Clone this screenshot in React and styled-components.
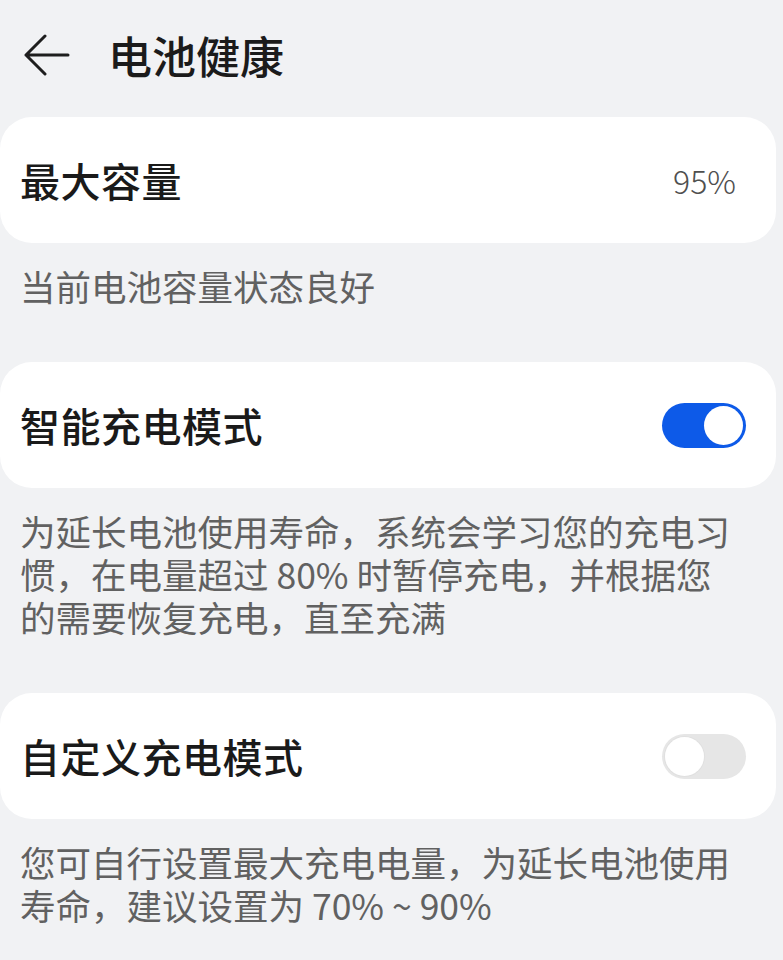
import React from 'react';
import styled, { createGlobalStyle } from 'styled-components';

const GlobalStyle = createGlobalStyle`
  html, body {
    margin: 0;
    padding: 0;
    background: #f1f2f4;
  }
  body {
    font-family: "Noto Sans CJK SC", "Noto Sans", sans-serif;
    -webkit-font-smoothing: antialiased;
  }
`;

const Page = styled.div`
  width: 783px;
  min-height: 960px;
  background: #f1f2f4;
  overflow: hidden;
`;

const Header = styled.div`
  display: flex;
  align-items: center;
  height: 110px;
  padding-left: 24px;
  gap: 38px;
`;

const BackButton = styled.button`
  display: flex;
  align-items: center;
  justify-content: center;
  padding: 0;
  border: none;
  background: none;
  width: 46px;
  height: 46px;
`;

const Title = styled.h1`
  margin: 0;
  font-size: 44px;
  font-weight: 500;
  color: #1b1b1b;
  line-height: 1;
`;

const Section = styled.div`
  display: flex;
  flex-direction: column;
  margin-top: ${p => p.$first ? '7px' : '55px'};
`;

const Card = styled.div`
  display: flex;
  align-items: center;
  justify-content: space-between;
  height: 126px;
  width: 776px;
  box-sizing: border-box;
  padding: 0 40px 0 20px;
  background: #ffffff;
  border-radius: 32px;
`;

const Label = styled.span`
  font-size: 40px;
  font-weight: 500;
  color: #1a1a1a;
  letter-spacing: 0.5px;
`;

const Value = styled.span`
  font-size: 32px;
  font-weight: 300;
  color: #4f4f4f;
`;

const Note = styled.p`
  margin: 21px 0 0;
  padding: 0 40px 0 20px;
  font-size: 35.5px;
  line-height: 43px;
  color: #616161;
`;

const Track = styled.div`
  display: flex;
  align-items: center;
  justify-content: ${p => p.$on ? 'flex-end' : 'flex-start'};
  width: 84px;
  height: 45px;
  box-sizing: border-box;
  padding: 0 3px;
  margin-right: -10px;
  border-radius: 23px;
  background: ${p => p.$on ? '#0d5ae8' : '#e6e6e6'};
`;

const Knob = styled.div`
  width: 39px;
  height: 39px;
  border-radius: 50%;
  background: #ffffff;
  box-shadow: ${p => p.$on ? 'none' : '0 0 0 1px #e0e0e0'};
`;

const Toggle = ({ on }) => (
  <Track $on={on}>
    <Knob $on={on} />
  </Track>
);

const BackArrow = () => (
  <svg width="46" height="46" viewBox="0 0 46 46" fill="none">
    <path d="M44 23H2M2 23L21 4M2 23L21 42" stroke="#1e1e1e" strokeWidth="3" strokeLinecap="round" strokeLinejoin="round" />
  </svg>
);

export default function App() {
  return (
    <Page>
      <GlobalStyle />
      <Header>
        <BackButton aria-label="返回">
          <BackArrow />
        </BackButton>
        <Title>电池健康</Title>
      </Header>

      <Section $first>
        <Card>
          <Label>最大容量</Label>
          <Value>95%</Value>
        </Card>
        <Note>当前电池容量状态良好</Note>
      </Section>

      <Section>
        <Card>
          <Label>智能充电模式</Label>
          <Toggle on />
        </Card>
        <Note>为延长电池使用寿命，系统会学习您的充电习惯，在电量超过 80% 时暂停充电，并根据您的需要恢复充电，直至充满</Note>
      </Section>

      <Section>
        <Card>
          <Label>自定义充电模式</Label>
          <Toggle on={false} />
        </Card>
        <Note>您可自行设置最大充电电量，为延长电池使用寿命，建议设置为 70% ~ 90%</Note>
      </Section>
    </Page>
  );
}
